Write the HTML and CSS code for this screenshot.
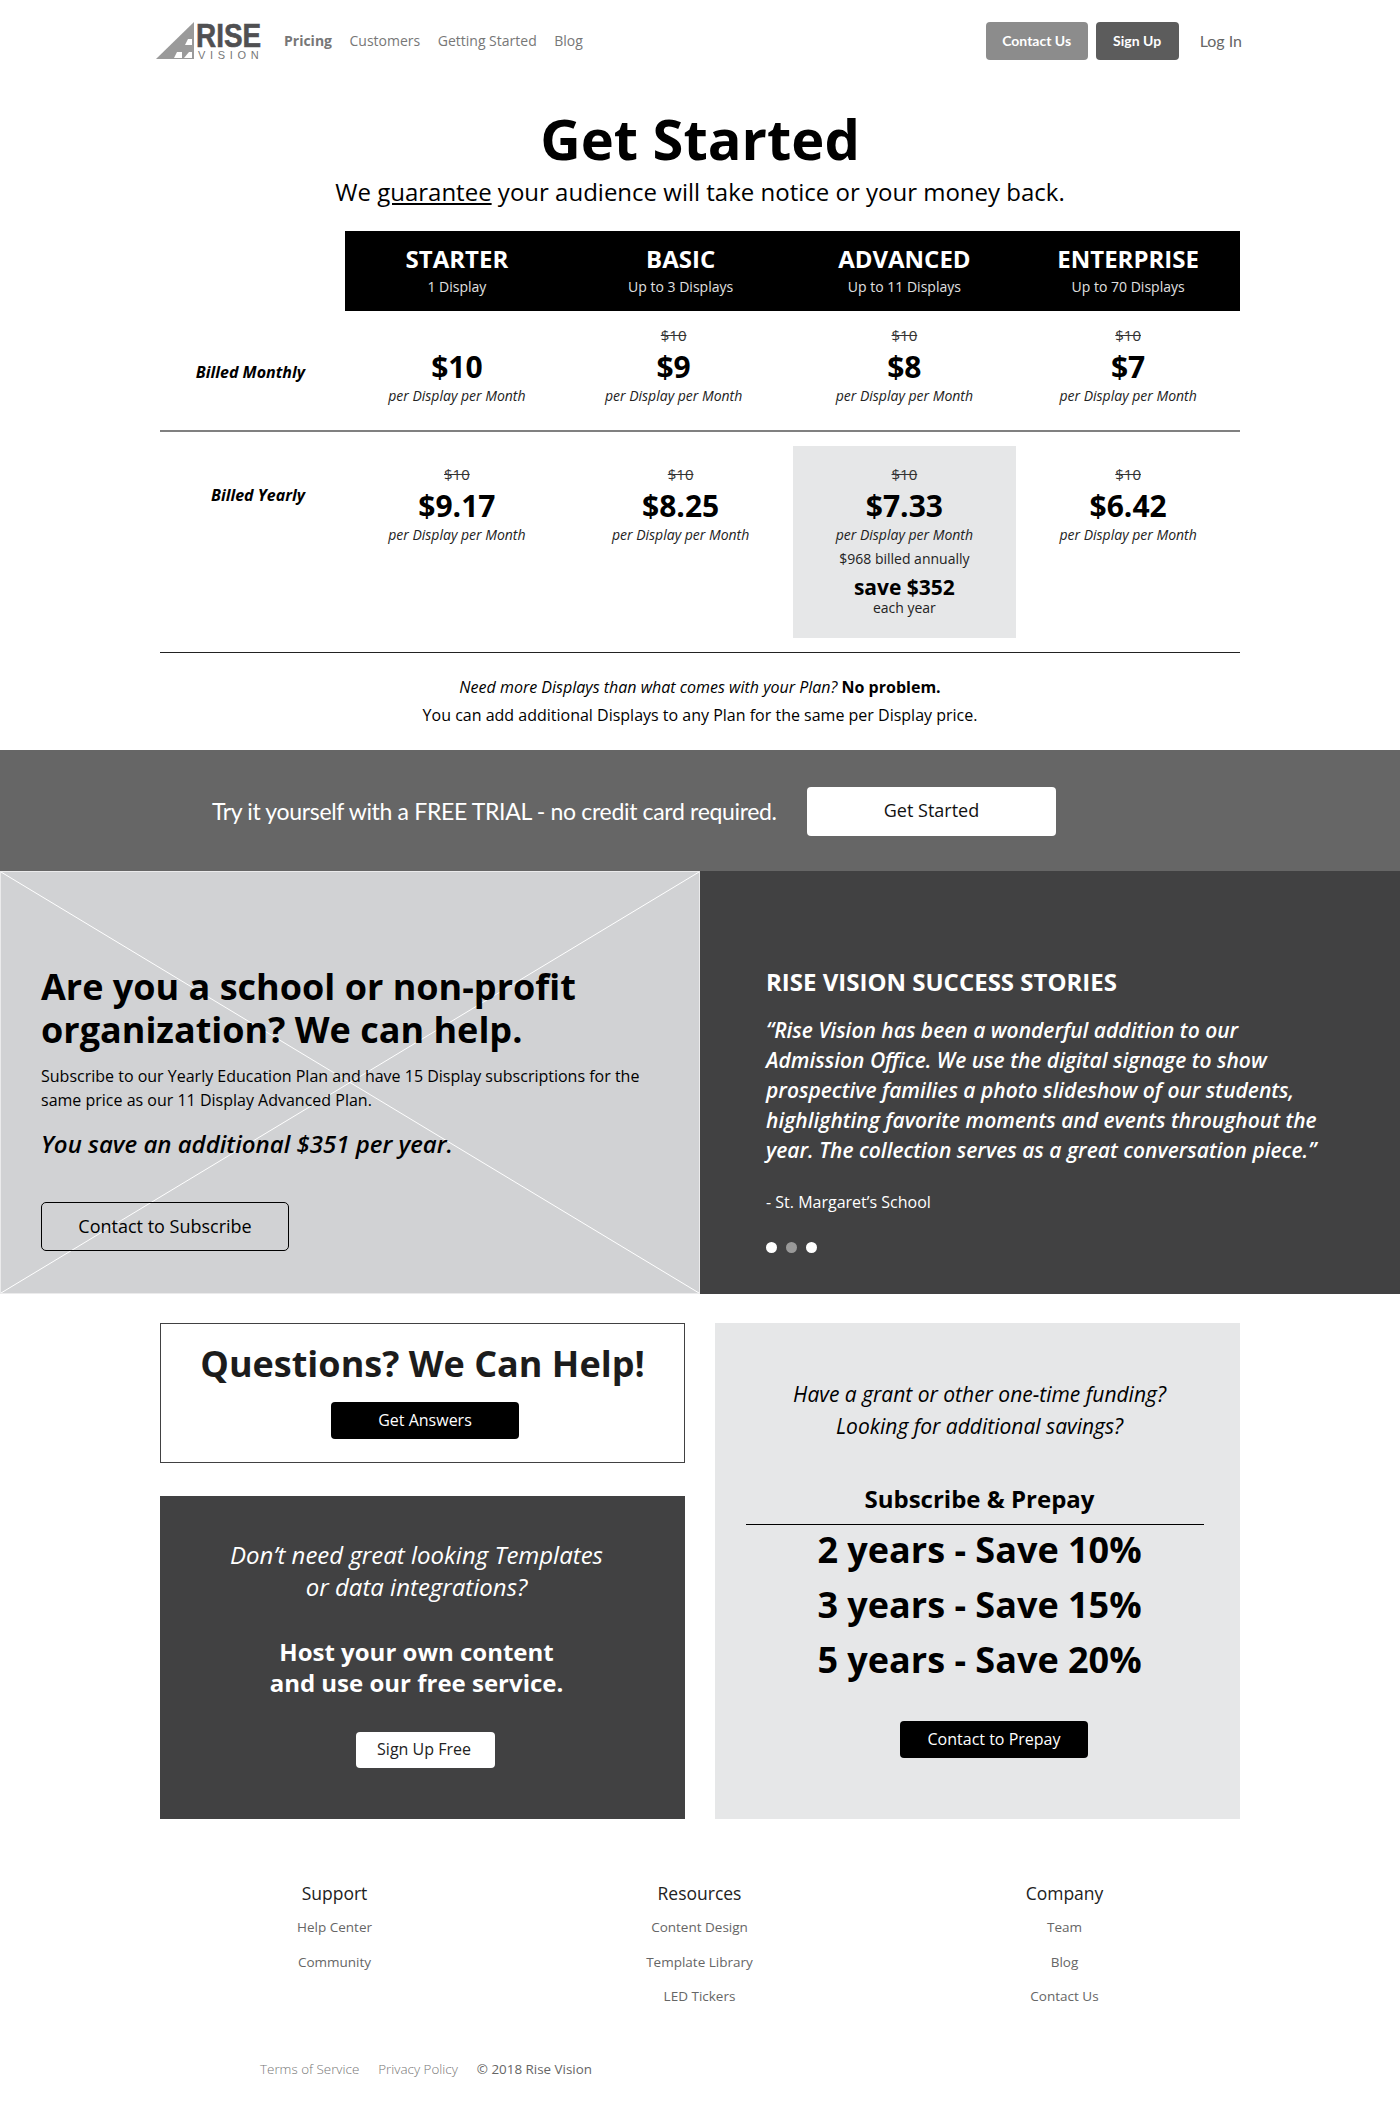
FILE: index.html
```html
<!DOCTYPE html>
<html>
  <head>
    <title>Pricing - Rise Vision</title>
    <link rel="stylesheet" href="styles.css">
  </head>
  <body>
    <header class="site-header">
      <a class="logo" href="#">
        <svg class="logo-mark" width="40" height="40" viewBox="0 0 40 40">
          <polygon points="0,38 38,1 38,38" fill="#9a9a9a"></polygon>
          <polygon points="36,18 32,18 29,24 36,24" fill="#fff"></polygon>
          <polygon points="26,31 21,31 18,37 26,37" fill="#fff"></polygon>
          <polygon points="36,31 33,31 28,37 36,37" fill="#fff"></polygon>
        </svg>
        <span class="logo-word">
          <span class="logo-rise">RISE</span>
          <span class="logo-vision">VISION</span>
        </span>
      </a>
      <nav class="main-nav">
        <a class="active" href="#">Pricing</a>
        <a href="#">Customers</a>
        <a href="#">Getting Started</a>
        <a href="#">Blog</a>
      </nav>
      <div class="header-actions">
        <a class="head-btn contact-btn" href="#">Contact Us</a>
        <a class="head-btn signup-btn" href="#">Sign Up</a>
        <a class="login-link" href="#">Log In</a>
      </div>
    </header>

    <section class="intro">
      <h1>Get Started</h1>
      <p>We <u>guarantee</u> your audience will take notice or your money back.</p>
    </section>

    <section class="pricing">
      <div class="plan-row plan-head-row">
        <div></div>
        <div class="plan-heads">
          <div class="plan-head"><strong>STARTER</strong><span>1 Display</span></div>
          <div class="plan-head"><strong>BASIC</strong><span>Up to 3 Displays</span></div>
          <div class="plan-head"><strong>ADVANCED</strong><span>Up to 11 Displays</span></div>
          <div class="plan-head"><strong>ENTERPRISE</strong><span>Up to 70 Displays</span></div>
        </div>
      </div>

      <div class="plan-row monthly">
        <div class="bill-label">Billed Monthly</div>
        <div class="plan-cells">
          <div class="price-cell">
            <div class="old-price"></div>
            <div class="price">$10</div>
            <div class="per">per Display per Month</div>
          </div>
          <div class="price-cell shifted">
            <div class="old-price"><s>$10</s></div>
            <div class="price">$9</div>
            <div class="per">per Display per Month</div>
          </div>
          <div class="price-cell">
            <div class="old-price"><s>$10</s></div>
            <div class="price">$8</div>
            <div class="per">per Display per Month</div>
          </div>
          <div class="price-cell">
            <div class="old-price"><s>$10</s></div>
            <div class="price">$7</div>
            <div class="per">per Display per Month</div>
          </div>
        </div>
      </div>

      <div class="plan-row yearly">
        <div class="bill-label">Billed Yearly</div>
        <div class="plan-cells">
          <div class="price-cell">
            <div class="old-price"><s>$10</s></div>
            <div class="price">$9.17</div>
            <div class="per">per Display per Month</div>
          </div>
          <div class="price-cell">
            <div class="old-price"><s>$10</s></div>
            <div class="price">$8.25</div>
            <div class="per">per Display per Month</div>
          </div>
          <div class="price-cell highlight">
            <div class="old-price"><s>$10</s></div>
            <div class="price">$7.33</div>
            <div class="per">per Display per Month</div>
            <div class="billed">$968 billed annually</div>
            <div class="save">save $352</div>
            <div class="each">each year</div>
          </div>
          <div class="price-cell">
            <div class="old-price"><s>$10</s></div>
            <div class="price">$6.42</div>
            <div class="per">per Display per Month</div>
          </div>
        </div>
      </div>

      <div class="more-note">
        <p><em>Need more Displays than what comes with your Plan?</em> <b>No problem.</b></p>
        <p>You can add additional Displays to any Plan for the same per Display price.</p>
      </div>
    </section>

    <section class="trial-band">
      <span>Try it yourself with a FREE TRIAL - no credit card required.</span>
      <a class="trial-btn" href="#">Get Started</a>
    </section>

    <section class="split">
      <div class="school">
        <svg class="cross" viewBox="0 0 700 423" preserveAspectRatio="none">
          <line x1="0" y1="0" x2="700" y2="423"></line>
          <line x1="700" y1="0" x2="0" y2="423"></line>
        </svg>
        <div class="school-text">
          <h2>Are you a school or non-profit organization? We can help.</h2>
          <p>Subscribe to our Yearly Education Plan and have 15 Display subscriptions for the same price as our 11 Display Advanced Plan.</p>
          <div class="school-save">You save an additional $351 per year.</div>
          <a class="outline-btn" href="#">Contact to Subscribe</a>
        </div>
      </div>
      <div class="stories">
        <h3>RISE VISION SUCCESS STORIES</h3>
        <blockquote>“Rise Vision has been a wonderful addition to our Admission Office. We use the digital signage to show prospective families a photo slideshow of our students, highlighting favorite moments and events throughout the year. The collection serves as a great conversation piece.”</blockquote>
        <div class="story-source">- St. Margaret’s School</div>
        <div class="dots">
          <span class="dot"></span>
          <span class="dot dim"></span>
          <span class="dot"></span>
        </div>
      </div>
    </section>

    <section class="help-grid">
      <div class="help-left">
        <div class="questions">
          <h2>Questions? We Can Help!</h2>
          <a class="black-btn" href="#">Get Answers</a>
        </div>
        <div class="host-card">
          <p class="lead">Don’t need great looking Templates<br>or data integrations?</p>
          <p class="host-bold">Host your own content<br>and use our free service.</p>
          <a class="white-btn" href="#">Sign Up Free</a>
        </div>
      </div>
      <div class="prepay">
        <p class="lead">Have a grant or other one-time funding?<br>Looking for additional savings?</p>
        <div class="prepay-title">Subscribe &amp; Prepay</div>
        <div class="prepay-line">2 years - Save 10%</div>
        <div class="prepay-line">3 years - Save 15%</div>
        <div class="prepay-line">5 years - Save 20%</div>
        <a class="black-btn" href="#">Contact to Prepay</a>
      </div>
    </section>

    <footer class="site-footer">
      <div class="foot-cols">
        <div class="foot-col">
          <h4>Support</h4>
          <a href="#">Help Center</a>
          <a href="#">Community</a>
        </div>
        <div class="foot-col">
          <h4>Resources</h4>
          <a href="#">Content Design</a>
          <a href="#">Template Library</a>
          <a href="#">LED Tickers</a>
        </div>
        <div class="foot-col">
          <h4>Company</h4>
          <a href="#">Team</a>
          <a href="#">Blog</a>
          <a href="#">Contact Us</a>
        </div>
      </div>
      <div class="legal">
        <a href="#">Terms of Service</a>
        <a href="#">Privacy Policy</a>
        <span>© 2018 Rise Vision</span>
      </div>
    </footer>
  </body>
</html>
```

FILE: styles.css
```css
* {
  box-sizing: border-box;
}

body {
  margin: 0;
  font-family: "Open Sans", Arial, sans-serif;
  color: #000;
  background-color: #fff;
}

a {
  text-decoration: none;
  color: inherit;
}

p, h1, h2, h3, h4 {
  margin: 0;
}

/* header */
.site-header {
  display: flex;
  align-items: center;
  height: 38px;
  margin-top: 22px;
  padding: 0 158px 0 156px;
}

.logo {
  display: flex;
  width: 106px;
  height: 40px;
}

.logo-word {
  display: flex;
  flex-direction: column;
  width: 66px;
}

.logo-rise {
  font-family: "Liberation Sans", Arial, sans-serif;
  font-size: 34px;
  line-height: 29px;
  font-weight: bold;
  color: #505052;
  -webkit-text-stroke: 0.6px #505052;
  transform: scaleX(0.82);
  transform-origin: left;
}

.logo-vision {
  padding-left: 2px;
  font-family: "Liberation Sans", Arial, sans-serif;
  font-size: 11px;
  line-height: 11px;
  letter-spacing: 4.7px;
  color: #777;
}

.main-nav {
  display: flex;
  gap: 17.5px;
  margin: -1px 0 0 22px;
  font-size: 14px;
  color: #777;
}

.main-nav .active {
  font-weight: 700;
}

.header-actions {
  display: flex;
  align-items: center;
  margin-left: auto;
  font-family: Lato, Arial, sans-serif;
}

.head-btn {
  height: 38px;
  line-height: 38px;
  text-align: center;
  border-radius: 4px;
  color: #fff;
  font-size: 14px;
  font-weight: 700;
}

.contact-btn {
  width: 102px;
  background-color: #8c8c8c;
}

.signup-btn {
  width: 83px;
  margin-left: 8px;
  background-color: #5c5c5c;
}

.login-link {
  margin: -2px 0 0 21px;
  font-size: 16px;
  color: #666;
}

/* intro */
.intro {
  margin-top: 46px;
  text-align: center;
}

.intro h1 {
  font-size: 56px;
  line-height: 64px;
  font-weight: 700;
}

.intro p {
  margin-top: 5px;
  font-size: 24px;
  line-height: 34px;
}

/* pricing table */
.pricing {
  width: 1080px;
  margin: 0 auto;
}

.plan-row {
  display: grid;
  grid-template-columns: 185px 1fr;
}

.plan-head-row {
  margin-top: 22px;
}

.plan-heads, .plan-cells {
  display: grid;
  grid-template-columns: repeat(4, 1fr);
}

.plan-heads {
  height: 80px;
  padding-top: 12px;
  background-color: #000;
  color: #fff;
  text-align: center;
}

.plan-head strong {
  display: block;
  font-size: 24px;
  line-height: 32px;
  font-weight: 700;
}

.plan-head span {
  display: block;
  margin-top: 2px;
  font-size: 14px;
  line-height: 20px;
  color: #e0e0e0;
}

.monthly {
  height: 121px;
  padding-top: 14px;
  border-bottom: 2px solid #808080;
}

.yearly {
  height: 221px;
  padding-top: 14px;
  border-bottom: 1px solid #222;
}

.bill-label {
  padding-right: 40px;
  text-align: right;
  font-size: 16px;
  line-height: 22px;
  font-weight: 700;
  font-style: italic;
}

.monthly .bill-label {
  padding-top: 36px;
}

.yearly .bill-label {
  padding-top: 38px;
}

.price-cell {
  text-align: center;
}

.monthly .shifted {
  padding-right: 14px;
}

.yearly .price-cell {
  height: 192px;
  padding-top: 18px;
}

.yearly .highlight {
  background-color: #e6e7e8;
}

.old-price {
  height: 20px;
  font-size: 15px;
  line-height: 20px;
  color: #333;
}

.price {
  margin-top: 3px;
  font-size: 30px;
  line-height: 38px;
  font-weight: 700;
}

.per {
  font-size: 14px;
  line-height: 20px;
  font-style: italic;
  color: #222;
}

.billed {
  margin-top: 4px;
  font-size: 14px;
  line-height: 20px;
  color: #222;
}

.save {
  margin-top: 6px;
  font-size: 21px;
  line-height: 24px;
  font-weight: 700;
}

.each {
  font-size: 14px;
  line-height: 17px;
  color: #222;
}

.more-note {
  padding-top: 20px;
  height: 97px;
  text-align: center;
  font-size: 16px;
  line-height: 28px;
}

/* trial band */
.trial-band {
  display: flex;
  align-items: center;
  height: 121px;
  padding-left: 212px;
  background-color: #666;
  color: #fff;
}

.trial-band span {
  width: 595px;
  font-family: Lato, Arial, sans-serif;
  font-size: 23px;
  letter-spacing: -0.33px;
  white-space: nowrap;
}

.trial-btn {
  width: 249px;
  height: 49px;
  margin-top: 2px;
  line-height: 47px;
  text-align: center;
  border-radius: 4px;
  background-color: #fff;
  color: #111;
  font-size: 18px;
}

/* school + stories */
.split {
  display: grid;
  grid-template-columns: 1fr 1fr;
  height: 423px;
}

.school {
  position: relative;
  padding: 93px 39px 0 40px;
  border: 1px solid #ebebec;
  background-color: #d1d2d4;
}

.cross {
  position: absolute;
  top: 0;
  left: 0;
  width: 100%;
  height: 100%;
}

.cross line {
  stroke: #fff;
  stroke-width: 1;
}

.school-text {
  position: relative;
}

.school h2 {
  font-size: 36px;
  line-height: 43px;
  font-weight: 700;
}

.school p {
  margin-top: 13px;
  font-size: 16px;
  line-height: 24px;
}

.school-save {
  margin-top: 15px;
  font-size: 24px;
  line-height: 34px;
  font-weight: 600;
  font-style: italic;
}

.outline-btn {
  display: block;
  width: 248px;
  height: 49px;
  margin-top: 41px;
  line-height: 47px;
  text-align: center;
  border: 1px solid #000;
  border-radius: 5px;
  font-size: 18px;
}

.stories {
  padding: 94px 70px 0 66px;
  background-color: #414142;
  color: #fff;
}

.stories h3 {
  font-size: 24px;
  line-height: 34px;
  font-weight: 700;
}

.stories blockquote {
  margin: 16px 0 0;
  font-size: 21px;
  line-height: 30px;
  font-weight: 600;
  font-style: italic;
}

.story-source {
  margin-top: 25px;
  font-size: 16px;
  line-height: 24px;
}

.dots {
  display: flex;
  gap: 9px;
  margin-top: 28px;
}

.dot {
  width: 11px;
  height: 11px;
  border-radius: 50%;
  background-color: #fff;
}

.dot.dim {
  background-color: #999;
}

/* help cards */
.help-grid {
  display: grid;
  grid-template-columns: 525px 525px;
  gap: 30px;
  width: 1080px;
  margin: 29px auto 0;
  height: 496px;
}

.help-left {
  display: flex;
  flex-direction: column;
  gap: 33px;
}

.questions {
  height: 140px;
  padding-top: 15px;
  border: 1px solid #414142;
  text-align: center;
}

.questions h2 {
  font-size: 36px;
  line-height: 50px;
  font-weight: 700;
  color: #1c1c1c;
}

.black-btn {
  display: block;
  width: 188px;
  height: 37px;
  line-height: 36px;
  text-align: center;
  border-radius: 4px;
  background-color: #000;
  color: #fff;
  font-size: 16px;
}

.questions .black-btn {
  margin: 13px 0 0 170px;
}

.lead {
  font-style: italic;
}

.host-card {
  flex: 1;
  padding: 43px 12px 0 0;
  background-color: #414142;
  color: #fff;
  text-align: center;
}

.host-card .lead {
  font-size: 24px;
  line-height: 32px;
}

.host-bold {
  margin-top: 33px;
  font-size: 24px;
  line-height: 31px;
  font-weight: 700;
}

.white-btn {
  display: block;
  width: 139px;
  height: 36px;
  margin: 34px 0 0 196px;
  padding-right: 3px;
  line-height: 35px;
  text-align: center;
  border-radius: 4px;
  background-color: #fff;
  color: #222;
  font-size: 16px;
}

.prepay {
  padding-top: 55px;
  background-color: #e6e7e8;
  text-align: center;
}

.prepay .lead {
  padding-left: 4px;
  font-size: 21px;
  line-height: 32px;
}

.prepay-title {
  margin: 40px 36px -3px 31px;
  padding: 0 0 8px 9px;
  border-bottom: 1px solid #000;
  font-size: 24px;
  line-height: 34px;
  font-weight: 700;
}

.prepay-line {
  padding-left: 4px;
  font-size: 36px;
  line-height: 55px;
  font-weight: 700;
}

.prepay .black-btn {
  margin: 34px 0 0 185px;
}

/* footer */
.foot-cols {
  display: flex;
  justify-content: center;
  margin-top: 60px;
  padding-right: 1px;
}

.foot-col {
  display: flex;
  flex-direction: column;
  width: 365px;
  text-align: center;
  font-size: 13.5px;
  line-height: 34.5px;
  color: #666;
}

.foot-col h4 {
  margin-bottom: 3px;
  font-size: 17.5px;
  line-height: 28px;
  font-weight: 400;
  color: #222;
}

.legal {
  display: flex;
  gap: 19px;
  margin-top: 45px;
  padding-left: 260px;
  font-size: 13.4px;
  line-height: 20px;
  font-weight: 300;
  color: #777;
}

.legal span {
  font-weight: 400;
  color: #666;
}
```
